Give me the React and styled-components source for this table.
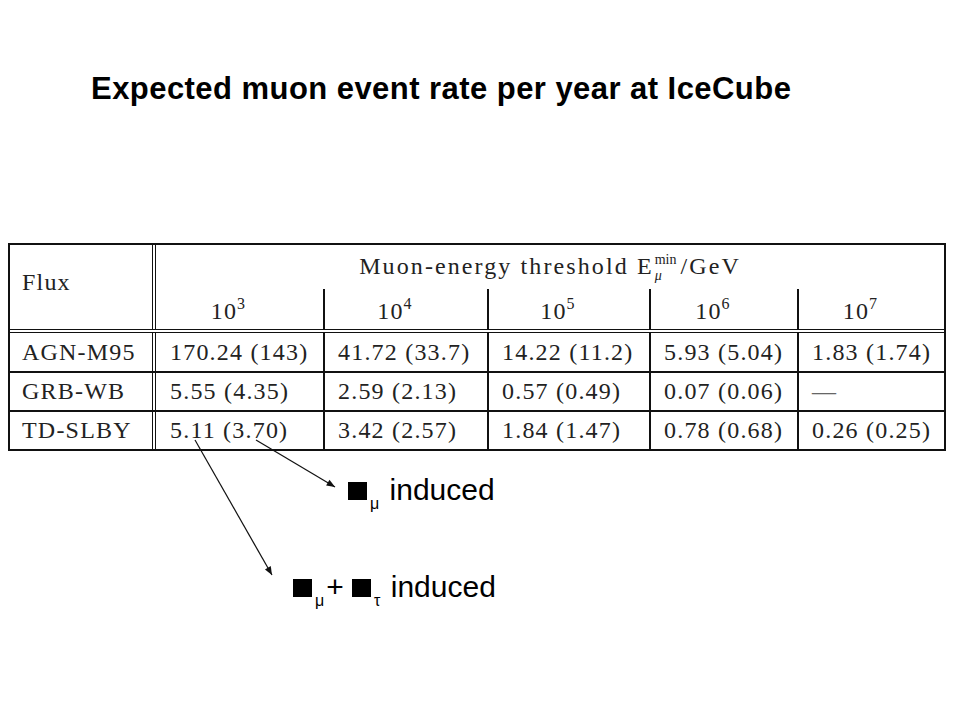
import React from 'react';
import styled, { createGlobalStyle } from 'styled-components';

const GlobalStyle = createGlobalStyle`
    html, body {
        margin: 0;
        padding: 0;
        background: #ffffff;
    }
`;

const Page = styled.div`
    position: relative;
    width: 960px;
    height: 720px;
    overflow: hidden;
    background: #ffffff;
`;

const Title = styled.h1`
    margin: 0;
    padding: 74px 0 0 91px;
    font-family: 'Liberation Sans', Arial, sans-serif;
    font-weight: bold;
    font-size: 31px;
    line-height: 30px;
    letter-spacing: 0.45px;
    color: #000;
`;

const Table = styled.div`
    box-sizing: border-box;
    width: 938px;
    margin: 139px 0 0 8px;
    border: 2px solid #111;
    font-family: 'Liberation Serif', 'Times New Roman', serif;
    font-size: 24px;
    letter-spacing: 1.2px;
    color: #222;
`;

const HeadBlock = styled.div`
    display: flex;
    border-bottom: 4px double #111;
`;

const FluxHead = styled.div`
    box-sizing: border-box;
    width: 146px;
    flex: none;
    border-right: 4px double #111;
    display: flex;
    align-items: center;
    padding: 0 0 10px 12px;
`;

const HeadRight = styled.div`
    flex: 1;
    display: flex;
    flex-direction: column;
`;

const Caption = styled.div`
    height: 42px;
    display: flex;
    align-items: center;
    justify-content: center;
    padding-bottom: 2px;
    letter-spacing: 2.1px;
`;

const Scripts = styled.span`
    display: inline-flex;
    flex-direction: column;
    align-items: flex-start;
    font-size: 14px;
    line-height: 16.5px;
    letter-spacing: 0;
    margin: 0 4px 0 1px;
    transform: translateY(2px);
`;

const Italic = styled.span`
    font-style: italic;
`;

const SubRow = styled.div`
    display: flex;
    height: 40px;
`;

const PowCell = styled.div`
    box-sizing: border-box;
    width: ${(p) => p.$w}px;
    flex: none;
    display: flex;
    align-items: center;
    justify-content: center;
    padding: 4px 22px 0 0;
    border-left: ${(p) => (p.$first ? 'none' : '2px solid #111')};
`;

const Sup = styled.sup`
    font-size: 16px;
    vertical-align: 10px;
    line-height: 0;
`;

const Row = styled.div`
    display: flex;
    height: ${(p) => p.$h}px;
    box-sizing: border-box;
    border-bottom: ${(p) => (p.$last ? 'none' : '2px solid #111')};
`;

const NameCell = styled.div`
    box-sizing: border-box;
    width: 146px;
    flex: none;
    border-right: 4px double #111;
    display: flex;
    align-items: center;
    padding-left: 12px;
`;

const ValCell = styled.div`
    box-sizing: border-box;
    width: ${(p) => p.$w}px;
    flex: none;
    display: flex;
    align-items: center;
    padding-left: ${(p) => (p.$first ? 14 : 13)}px;
    border-left: ${(p) => (p.$first ? 'none' : '2px solid #111')};
    white-space: nowrap;
`;

const Dash = styled.span`
    color: #666;
`;

const Label = styled.div`
    margin: ${(p) => p.$top}px 0 0 ${(p) => p.$left}px;
    font-family: 'Liberation Sans', Arial, sans-serif;
    font-size: 30px;
    line-height: 30px;
    color: #000;
    white-space: nowrap;
`;

const Box = styled.span`
    display: inline-block;
    width: 19px;
    height: 18px;
    background: #000;
`;

const Sub = styled.sub`
    font-size: 16px;
    vertical-align: -9px;
    line-height: 0;
    margin: 0 2px 0 3px;
`;

const Overlay = styled.svg`
    position: absolute;
    left: 0;
    top: 0;
    pointer-events: none;
`;

const widths = [167, 164, 162, 148, 147];
const powers = [3, 4, 5, 6, 7];

const rows = [
    { name: 'AGN-M95', h: 40, vals: ['170.24 (143)', '41.72 (33.7)', '14.22 (11.2)', '5.93 (5.04)', '1.83 (1.74)'] },
    { name: 'GRB-WB', h: 39, vals: ['5.55 (4.35)', '2.59 (2.13)', '0.57 (0.49)', '0.07 (0.06)', null] },
    { name: 'TD-SLBY', h: 37, vals: ['5.11 (3.70)', '3.42 (2.57)', '1.84 (1.47)', '0.78 (0.68)', '0.26 (0.25)'] },
];

const Arrow = ({ x1, y1, x2, y2 }) => {
    const ang = Math.atan2(y2 - y1, x2 - x1);
    const len = 9;
    const spread = 0.38;
    const p1 = [x2 - len * Math.cos(ang - spread), y2 - len * Math.sin(ang - spread)];
    const p2 = [x2 - len * Math.cos(ang + spread), y2 - len * Math.sin(ang + spread)];
    return (
        <g>
            <line x1={x1} y1={y1} x2={x2} y2={y2} stroke="#111" strokeWidth="1.2" />
            <polygon points={`${x2},${y2} ${p1[0]},${p1[1]} ${p2[0]},${p2[1]}`} fill="#111" />
        </g>
    );
};

const App = () => {
    return (
        <Page>
            <GlobalStyle />
            <Title>Expected muon event rate per year at IceCube</Title>
            <Table>
                <HeadBlock>
                    <FluxHead>Flux</FluxHead>
                    <HeadRight>
                        <Caption>
                            <span>Muon-energy threshold E</span>
                            <Scripts>
                                <span>min</span>
                                <Italic>μ</Italic>
                            </Scripts>
                            <span>/GeV</span>
                        </Caption>
                        <SubRow>
                            {powers.map((p, i) => (
                                <PowCell key={p} $w={widths[i]} $first={i === 0}>
                                    <span>
                                        10<Sup>{p}</Sup>
                                    </span>
                                </PowCell>
                            ))}
                        </SubRow>
                    </HeadRight>
                </HeadBlock>
                {rows.map((r, ri) => (
                    <Row key={r.name} $h={r.h} $last={ri === rows.length - 1}>
                        <NameCell>{r.name}</NameCell>
                        {r.vals.map((v, i) => (
                            <ValCell key={i} $w={widths[i]} $first={i === 0}>
                                {v === null ? <Dash>—</Dash> : v}
                            </ValCell>
                        ))}
                    </Row>
                ))}
            </Table>
            <Label $top={24} $left={348}>
                <Box />
                <Sub>μ</Sub> induced
            </Label>
            <Label $top={67} $left={293}>
                <Box />
                <Sub>μ</Sub>+ <Box />
                <Sub>τ</Sub> induced
            </Label>
            <Overlay width="960" height="720">
                <Arrow x1={256} y1={440} x2={335} y2={487} />
                <Arrow x1={195} y1={440} x2={272} y2={575} />
            </Overlay>
        </Page>
    );
};

export default App;
